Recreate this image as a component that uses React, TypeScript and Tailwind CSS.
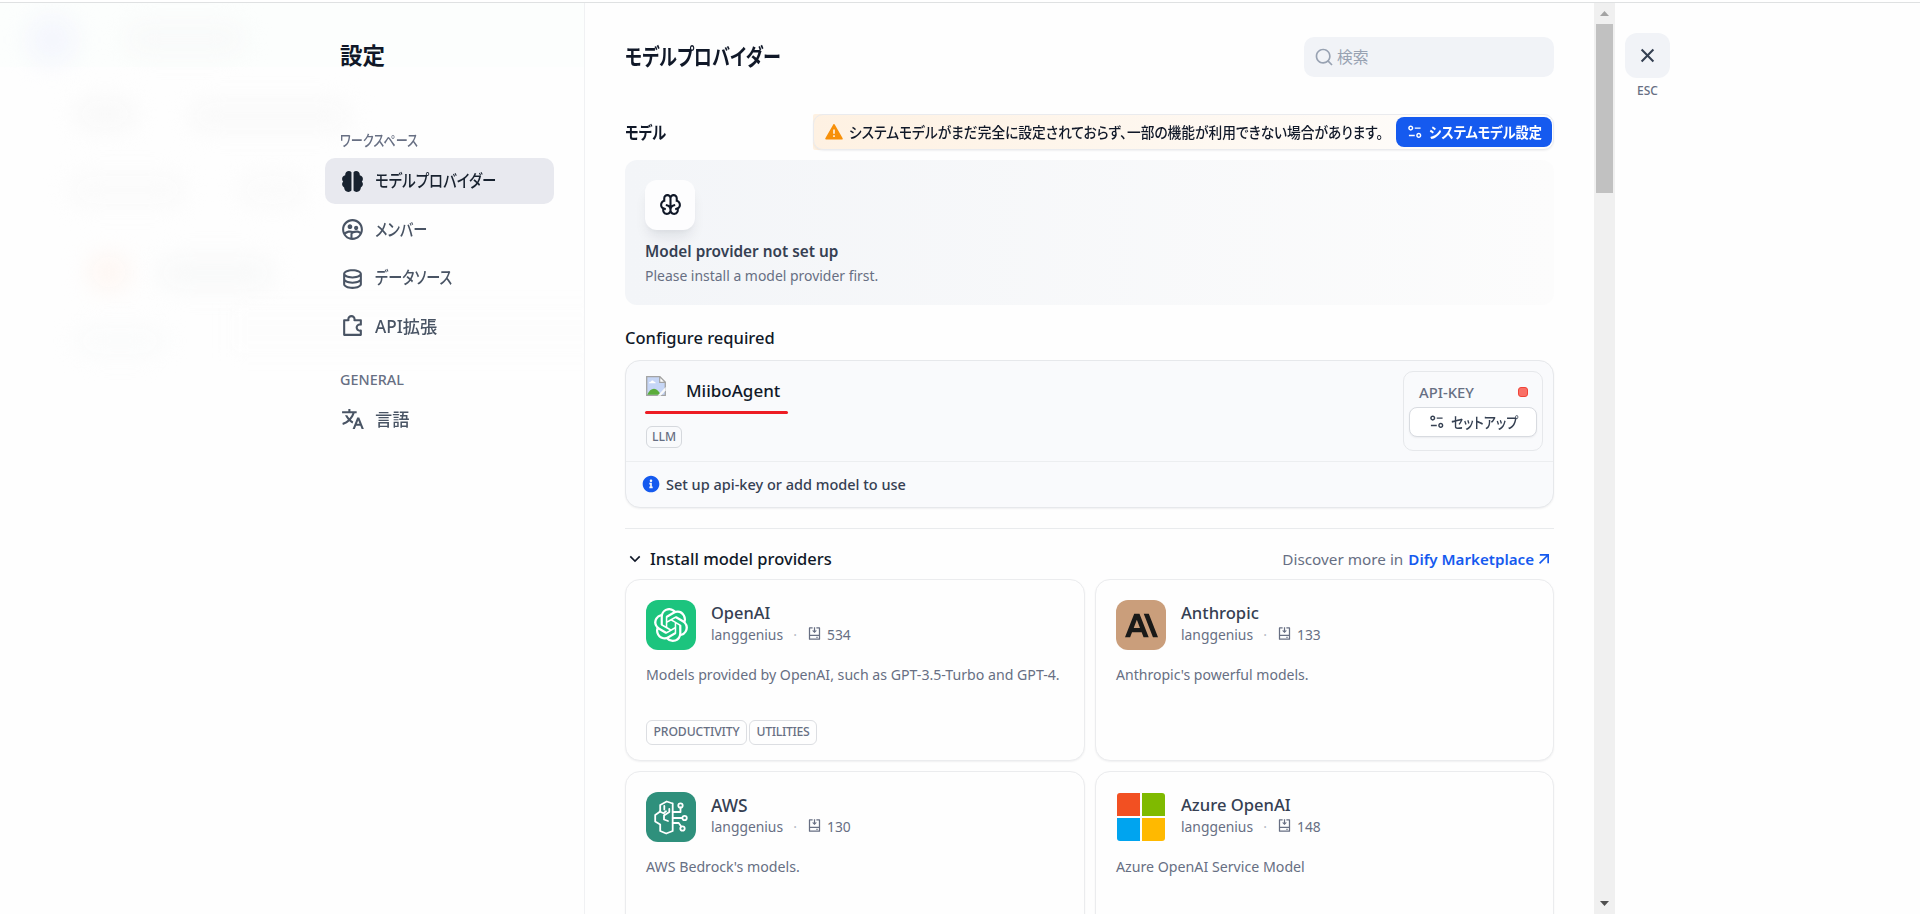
import type { ReactNode } from "react";
import {
  RiAlertFill, RiArrowDownSLine, RiArrowRightUpLine, RiBrain2Fill, RiBrainLine, RiCloseLine, RiDatabase2Line,
  RiEqualizer2Line, RiGroup2Line, RiInformation2Fill, RiInstallLine, RiPuzzle2Line, RiSearchLine, RiTranslate2,
} from "react-icons/ri";
import { SiAnthropic, SiOpenai } from "react-icons/si";

/** Condensed Japanese label: `box` sets the laid-out width, `fit` the glyph condensation. */
function Jp({ box, fit, children }: { box: string; fit: string; children: ReactNode }) {
  return (
    <span className={`block shrink-0 ${box}`}>
      <span className={`block w-max origin-left whitespace-nowrap ${fit}`}>{children}</span>
    </span>
  );
}

function NavItem({ icon, active, children }: { icon: ReactNode; active?: boolean; children: ReactNode }) {
  return (
    <a className={`mb-[2.5px] flex h-[46px] w-[229px] items-center gap-[10px] rounded-[10px] pl-[15px] text-[17.5px] leading-[26px] font-medium ${active ? "bg-[#e8e9ef] text-[#18222f]" : "text-[#495464]"}`}>
      {icon}
      <span className="pb-[2px]">{children}</span>
    </a>
  );
}

function AwsLogo() {
  return (
    <svg viewBox="0 0 50 50" className="size-[50px]" fill="none" stroke="white" strokeWidth="1.8" strokeLinejoin="round" strokeLinecap="round">
      <path d="M26.700 11.500v27M26.700 11.500l-6-2-6.500 3.500v6.500l-5 3.500v6.500l5 3v6.500l6 2.500 6.500-2.500" />
      <path d="M13.800 19.500l4.200 2M18.300 14v3.500M23.300 17v3l-5.300 3.500v4l4 1.500M17.500 21.300l2.500-2" />
      <path d="M26.700 20h7.800v-4.500M26.700 26h9.500M26.700 31h6l2.500 3.500" />
      <circle cx="34.500" cy="13.500" r="2.200" />
      <circle cx="38.600" cy="26" r="2.200" />
      <circle cx="36.500" cy="36.500" r="2.200" />
    </svg>
  );
}

function MicrosoftLogo() {
  return (
    <span className="grid size-[50px] place-items-center">
      <span className="grid size-[48px] grid-cols-2 gap-[2px] overflow-hidden rounded-[3px]">
        <span className="bg-[#f25022]" />
        <span className="bg-[#7fba00]" />
        <span className="bg-[#00a4ef]" />
        <span className="bg-[#ffb900]" />
      </span>
    </span>
  );
}

function BrokenImage() {
  return (
    <svg viewBox="0 0 20 20" className="size-[20px]">
      <path d="M.7.7h13l5.600 5.600v13H.7z" fill="#c6d6f6" stroke="#a3a3a3" strokeWidth="1.300" />
      <path d="M3 7.200c0-1.200 1-1.700 1.900-1.500.4-1.500 2.600-1.500 3 0 1.200-.1 1.800.6 1.800 1.500z" fill="#fff" />
      <path d="M1.300 18.700c1.500-4 4-6 6.700-6s5 2.500 6.500 6z" fill="#5bac3b" />
      <path d="M13.700.7v5.600h5.600z" fill="#fff" stroke="#a3a3a3" strokeWidth="1.200" />
      <path d="M11.500 19.700L19.700 11v3.500l-5 5.200z" fill="#f9fafb" />
    </svg>
  );
}

interface Provider {
  logo: ReactNode;
  name: string;
  nameSize: string;
  count: string;
  text: string;
  textSize: string;
  tags?: boolean;
}

const providers: Provider[] = [
  { logo: <span className="grid size-[50px] place-items-center rounded-[12px] bg-[#1cc47e] text-white"><SiOpenai className="size-[34px]" /></span>, name: "OpenAI", nameSize: "text-[16.4px]", count: "534", text: "Models provided by OpenAI, such as GPT-3.5-Turbo and GPT-4.", textSize: "text-[14.15px]", tags: true },
  { logo: <span className="grid size-[50px] place-items-center rounded-[12px] bg-[#ca9e7b] text-[#191918]"><SiAnthropic className="size-[33px]" /></span>, name: "Anthropic", nameSize: "text-[16.6px]", count: "133", text: "Anthropic's powerful models.", textSize: "text-[14.05px]" },
  { logo: <span className="grid size-[50px] place-items-center rounded-[12px] bg-[#2f907c]"><AwsLogo /></span>, name: "AWS", nameSize: "text-[17.4px]", count: "130", text: "AWS Bedrock's models.", textSize: "text-[14.2px]" },
  { logo: <MicrosoftLogo />, name: "Azure OpenAI", nameSize: "text-[16.6px]", count: "148", text: "Azure OpenAI Service Model", textSize: "text-[14.2px]" },
];

function ProviderCard({ p }: { p: Provider }) {
  return (
    <div className="flex h-[182px] flex-col rounded-[15px] border border-[#ebecee] bg-[#fefefe] px-5 pt-5 shadow-[0_1px_2px_rgba(16,24,40,0.06)]">
      <div className="flex">
        {p.logo}
        <div className="ml-[15px]">
          <div className={`h-[25px] leading-[26px] font-medium whitespace-nowrap text-[#354052] ${p.nameSize}`}>{p.name}</div>
          <div className="flex h-[20px] items-center text-[13.85px] leading-[20px] text-[#676f83]">
            <span className="w-[72px]">langgenius</span>
            <span className="w-[24px] text-center text-[#b5bac4]">·</span>
            <RiInstallLine className="mr-[5px] mb-[3px] size-[15px]" />
            <span>{p.count}</span>
          </div>
        </div>
      </div>
      <p className={`mt-[15px] h-[20px] leading-[20px] whitespace-nowrap text-[#676f83] ${p.textSize}`}>{p.text}</p>
      {p.tags && (
        <div className="mt-[35px] flex gap-[2px] text-[12.2px] leading-[22px] font-medium text-[#676f83]">
          <span className="h-[25px] w-[101px] rounded-[6px] border border-[#dcdee2] text-center tracking-[-0.1px]">PRODUCTIVITY</span>
          <span className="h-[25px] w-[68px] rounded-[6px] border border-[#dcdee2] text-center tracking-[-0.3px]">UTILITIES</span>
        </div>
      )}
    </div>
  );
}

function Backdrop() {
  return (
    <div className="absolute inset-0 overflow-hidden bg-[#fefefe]" aria-hidden="true">
      <div className="absolute top-[3px] left-0 h-[64px] w-full bg-[#fcfefd]" />
      <div className="absolute top-[15px] left-[27px] size-[50px] rounded-full bg-[#f4f6fd] blur-[12px]" />
      <div className="absolute top-[24px] left-[125px] h-[30px] w-[120px] rounded-full bg-[#f8f9f9] blur-[12px]" />
      <div className="absolute top-[100px] left-[75px] h-[28px] w-[60px] rounded-full bg-[#f8f8f8] blur-[12px]" />
      <div className="absolute top-[102px] left-[190px] h-[28px] w-[160px] rounded-full bg-[#f9f9f9] blur-[12px]" />
      <div className="absolute top-[176px] left-[70px] h-[28px] w-[115px] rounded-full bg-[#fafafa] blur-[12px]" />
      <div className="absolute top-[176px] left-[240px] h-[28px] w-[65px] rounded-full bg-[#fafafa] blur-[12px]" />
      <div className="absolute top-[254px] left-[88px] h-[36px] w-[42px] rounded-full bg-[#fef6f2] blur-[12px]" />
      <div className="absolute top-[257px] left-[158px] h-[32px] w-[115px] rounded-full bg-[#f8f9f9] blur-[12px]" />
      <div className="absolute top-[328px] left-[75px] h-[26px] w-[90px] rounded-full bg-[#fafbfb] blur-[12px]" />
      <div className="absolute top-[308px] left-[230px] h-[45px] w-[370px] bg-[#fdfdfd] blur-[8px]" />
    </div>
  );
}

export default function App() {
  return (
    <div className="relative flex h-[914px] w-[1920px] overflow-hidden bg-[#fefefe] font-['Noto_Sans','Noto_Sans_CJK_JP',sans-serif] [font-feature-settings:'palt']">
      <aside className="relative w-[585px] shrink-0 border-r border-[#f0f1f3]">
        <Backdrop />
        <div className="relative pt-[39px] pl-[325px]">
          <h1 className="h-[34px] pl-[15px] text-[22.5px] leading-[34px] font-semibold text-[#101828]">設定</h1>
          <div className="mt-[56px] mb-[7px] h-[22px] pl-[15px] text-[15px] leading-[22px] font-medium text-[#676f83]">
            <Jp box="w-[78px]" fit="scale-x-[0.81]">ワークスペース</Jp>
          </div>
          <nav>
            <NavItem active icon={<RiBrain2Fill className="size-[25px]" />}><Jp box="w-[121px]" fit="scale-x-[0.825]">モデルプロバイダー</Jp></NavItem>
            <NavItem icon={<RiGroup2Line className="size-[25px]" />}><Jp box="w-[52px]" fit="scale-x-[0.81]">メンバー</Jp></NavItem>
            <NavItem icon={<RiDatabase2Line className="size-[25px]" />}><Jp box="w-[77px]" fit="scale-x-[0.81]">データソース</Jp></NavItem>
            <NavItem icon={<RiPuzzle2Line className="size-[25px]" />}><Jp box="w-[62px]" fit="scale-x-[0.98]">API拡張</Jp></NavItem>
          </nav>
          <div className="mt-[19px] mb-[6px] h-[22px] pl-[15px] text-[14.4px] leading-[21px] font-medium text-[#676f83]">GENERAL</div>
          <NavItem icon={<RiTranslate2 className="size-[25px]" />}><Jp box="w-[35px]" fit="scale-x-[0.985]">言語</Jp></NavItem>
        </div>
      </aside>

      <main className="w-[1009px] shrink-0 px-10 pt-[37px]">
        <header className="flex h-[40px] w-[929px] items-center justify-between">
          <h2 className="pb-[1px] text-[22.5px] leading-[34px] font-semibold text-[#101828]"><Jp box="w-[155px]" fit="scale-x-[0.805]">モデルプロバイダー</Jp></h2>
          <div className="flex h-[40px] w-[250px] items-center rounded-[10px] bg-[#f1f3f7] pl-[10px] text-[#98a2b2]">
            <RiSearchLine className="size-[20px]" />
            <span className="ml-[3px] text-[15.8px] leading-[24px]">検索</span>
          </div>
        </header>

        <div className="mt-[37px] flex h-[36px] w-[929px] items-center justify-between">
          <h3 className="text-[17.5px] leading-[26px] font-semibold text-[#101828]"><Jp box="w-[41px]" fit="scale-x-[0.82]">モデル</Jp></h3>
          <div className="flex h-[36px] w-[741px] items-center rounded-l-[2px] rounded-r-[10px] bg-linear-to-r from-[#fef1e2] to-[#fefefe]">
            <div className="flex h-[36px] w-[741px] items-center rounded-[10px] border border-[#eaebee] pl-[10px] shadow-[0_1px_2px_rgba(16,24,40,0.06)]">
              <RiAlertFill className="mr-[5px] size-[20px] shrink-0 text-[#f79009]" />
              <div className="text-[15px] leading-[22px] font-medium text-[#101828]">
                <Jp box="w-[547px]" fit="scale-x-[0.915]">システムモデルがまだ完全に設定されておらず、一部の機能が利用できない場合があります。</Jp>
              </div>
              <button className="flex h-[30px] w-[156px] shrink-0 items-center rounded-[8px] bg-[#155aef] pl-[10px] text-[15px] leading-[22px] font-bold text-white">
                <RiEqualizer2Line className="mr-[5px] size-[17.500px]" />
                <Jp box="w-[112px]" fit="scale-x-[0.882]">システムモデル設定</Jp>
              </button>
            </div>
          </div>
        </div>

        <section className="mt-[10px] h-[145px] w-[929px] rounded-[12px] bg-linear-to-r from-[#f3f5f8] to-[#fcfcfc] p-5">
          <div className="grid size-[50px] place-items-center rounded-[12px] bg-[#fdfdfe] pb-px text-[#101828] shadow-[0_10px_14px_-3px_rgba(16,24,40,0.09),0_3px_5px_-2px_rgba(16,24,40,0.04)]">
            <RiBrainLine className="size-[25px]" />
          </div>
          <div className="mt-[9px] h-[24px] text-[15.35px] leading-[24px] font-semibold text-[#354052]">Model provider not set up</div>
          <div className="mt-[1px] h-[22px] text-[13.95px] leading-[23px] text-[#676f83]">Please install a model provider first.</div>
        </section>

        <h3 className="mt-[22px] h-[24px] text-[16.5px] leading-[22px] font-medium text-[#101828]">Configure required</h3>
        <section className="mt-[9px] h-[148px] w-[929px] rounded-[15px] border border-[#e6e8eb] bg-[#f9fafc] shadow-[0_1px_2px_rgba(16,24,40,0.06)]">
          <div className="flex h-[101px] justify-between border-b border-[#eceef0]">
            <div className="pt-[15px] pl-[20px]">
              <div className="flex h-[35px]">
                <BrokenImage />
                <span className="ml-[20px] h-[32px] text-[17px] leading-[30px] font-medium text-[#101828]">MiiboAgent</span>
              </div>
              <div className="-ml-px h-[3px] w-[143px] rounded-full bg-[#ed1c24]" />
              <div className="mt-[12px] h-[22px] w-[36px] rounded-[6px] border border-[#d5d8dd] text-center text-[12.1px] leading-[19px] font-medium text-[#676f83]">LLM</div>
            </div>
            <div className="mt-[10px] mr-[10px] h-[80px] w-[140px] rounded-[10px] border border-[#e6e8eb] px-[5px] pt-[9px]">
              <div className="flex h-[26px] items-start justify-between pr-[9px] pl-[10px] text-[14.8px] leading-[22px] font-medium text-[#676f83]">
                API-KEY
                <span className="mt-[6px] size-[10px] rounded-[3px] border border-[#f04438] bg-[#f97066]" />
              </div>
              <button className="flex h-[30px] w-[128px] items-center rounded-[8px] border border-[#d8dbe0] bg-white pb-px pl-[18px] text-[15px] leading-[22px] font-medium text-[#354052] shadow-[0_1px_2px_rgba(16,24,40,0.06)]">
                <RiEqualizer2Line className="mr-[5px] size-[17.500px]" />
                <Jp box="w-[67px]" fit="scale-x-[0.87]">セットアップ</Jp>
              </button>
            </div>
          </div>
          <div className="flex h-[46px] items-center pl-[15px] text-[14.5px] leading-[22px] font-medium text-[#354052]">
            <RiInformation2Fill className="mr-[5px] mb-[2px] size-[20px] text-[#155aef]" />
            <span className="pb-[3px]">Set up api-key or add model to use</span>
          </div>
        </section>

        <div className="mt-[20px] h-px w-[929px] bg-[#e9ebed]" />
        <div className="mt-[18px] flex h-[26px] w-[929px] items-center justify-between">
          <div className="flex items-center pb-[2px] text-[16.5px] leading-[26px] font-medium text-[#101828]">
            <RiArrowDownSLine className="mr-[5px] size-[20px]" />
            Install model providers
          </div>
          <div className="flex items-center pb-[2px] text-[15.3px] leading-[26px] text-[#676f83]">
            Discover more in
            <a className="ml-[5px] flex items-center text-[15.15px] font-semibold text-[#155aef]">
              Dify Marketplace
              <RiArrowRightUpLine className="size-[20px]" />
            </a>
          </div>
        </div>
        <div className="mt-[6px] grid w-[929px] grid-cols-[460px_459px] gap-[10px]">
          {providers.map((p) => <ProviderCard key={p.name} p={p} />)}
        </div>
      </main>

      <div className="flex w-[21px] shrink-0 flex-col items-center justify-between bg-[#f0f0f0] pt-[11px] pb-[8px]">
        <div className="flex flex-col items-center">
          <svg viewBox="0 0 9 5" className="h-[5px] w-[9px] fill-[#a3a3a3]"><path d="M0 5L4.500 0L9 5z" /></svg>
          <div className="mt-[8px] h-[169px] w-[17px] bg-[#c1c1c1]" />
        </div>
        <svg viewBox="0 0 9 5" className="h-[5px] w-[9px] fill-[#505050]"><path d="M0 0L4.500 5L9 0z" /></svg>
      </div>

      <div className="flex flex-col items-center pt-[33px] pl-[10px]">
        <button className="grid size-[45px] place-items-center rounded-[12px] bg-[#f1f3f7] text-[#354052]"><RiCloseLine className="size-[25px]" /></button>
        <span className="mt-[3px] text-[12px] leading-[20px] font-medium text-[#676f83]">ESC</span>
      </div>

      <div className="absolute top-0 left-0 h-[3px] w-full border-b border-[#dfe1e2] bg-white" />
    </div>
  );
}
